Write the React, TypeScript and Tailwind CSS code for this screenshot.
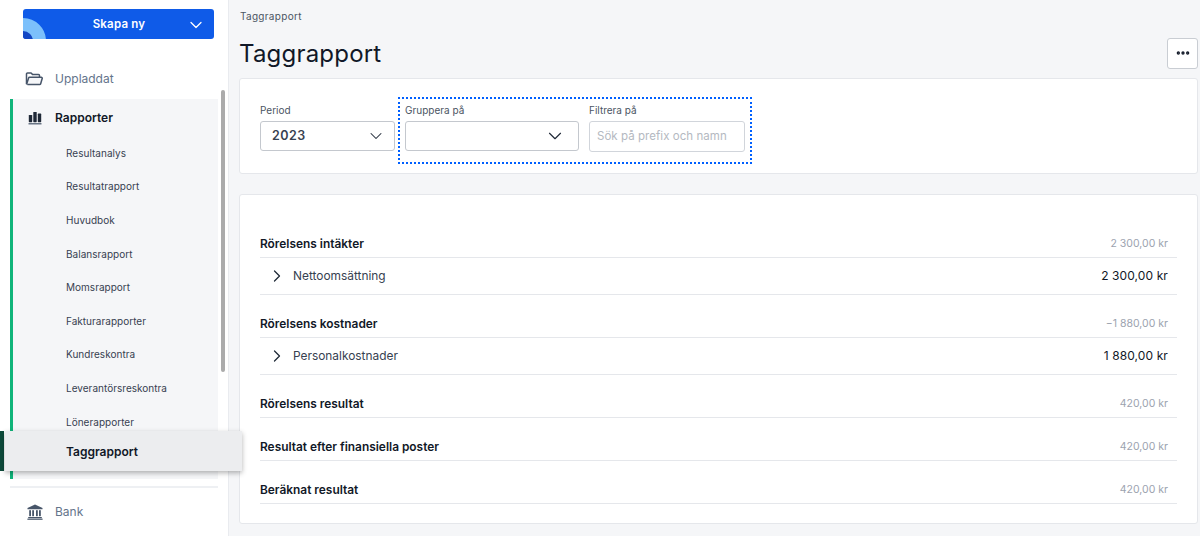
import { ChevronDown, ChevronRight, Ellipsis } from 'lucide-react';

const reportLinks = [
  'Resultanalys',
  'Resultatrapport',
  'Huvudbok',
  'Balansrapport',
  'Momsrapport',
  'Fakturarapporter',
  'Kundreskontra',
  'Leverantörsreskontra',
  'Lönerapporter',
];

function FolderIcon() {
  return (
    <svg width="18" height="14" viewBox="0 0 18 14" fill="none" stroke="#475569" strokeWidth="1.5" strokeLinejoin="round">
      <path d="M1.5 12V2a1 1 0 0 1 1-1h3.6l1.6 1.6h5.8a1 1 0 0 1 1 1V5" />
      <path d="M1.5 12.6 3.6 6a1 1 0 0 1 1-.7h11.6a1 1 0 0 1 1 1.3l-1.6 5.4a1 1 0 0 1-1 .6H2.4" fill="#f5f6f8" />
    </svg>
  );
}

function ChartIcon() {
  return (
    <svg width="14" height="14" viewBox="0 0 14 14" fill="#1f2937">
      <rect x="0.8" y="4" width="3.4" height="7.2" rx="0.6" />
      <rect x="5.3" y="1" width="3.4" height="10.2" rx="0.6" />
      <rect x="9.8" y="2.6" width="3.4" height="8.6" rx="0.6" />
      <rect x="0.5" y="12.2" width="13" height="1.2" fill="#475569" />
    </svg>
  );
}

function BankIcon() {
  return (
    <svg width="16" height="16" viewBox="0 0 16 16" fill="#475569">
      <path d="M8 0.5 15.5 4v1.2H0.5V4z" />
      <rect x="2.2" y="6.2" width="1.8" height="6" />
      <rect x="5.2" y="6.2" width="1.8" height="6" />
      <rect x="9" y="6.2" width="1.8" height="6" />
      <rect x="12" y="6.2" width="1.8" height="6" />
      <rect x="1.2" y="13" width="13.6" height="1.2" />
      <rect x="0.4" y="14.6" width="15.2" height="1.2" />
    </svg>
  );
}

function SumRow({ label, value }: { label: string; value: string }) {
  return (
    <div className="flex h-[43px] items-end justify-between border-b border-[#e5e7eb] pb-[3px]">
      <span className="text-[11.9px] leading-[20px] font-semibold text-[#111827]">{label}</span>
      <span className="pr-[9px] text-[10.5px] leading-[20px] text-[#9ca3af]">{value}</span>
    </div>
  );
}

function DetailRow({ label, value }: { label: string; value: string }) {
  return (
    <div className="flex h-[37px] items-center justify-between border-b border-[#e5e7eb]">
      <span className="flex items-center gap-[6px] pl-[7px] text-[11.9px] text-[#374151]">
        <ChevronRight className="h-5 w-5 text-[#1f2937]" strokeWidth={1.5} />
        {label}
      </span>
      <span className="pr-[9px] text-[12px] tracking-[0.1px] text-[#111827]">{value}</span>
    </div>
  );
}

export default function App() {
  return (
    <div className="flex h-[536px] w-[1200px] overflow-hidden bg-[#f5f6f8] font-['Inter',sans-serif]">
      {/* Sidebar */}
      <aside className="relative z-10 h-full w-[229px] shrink-0 border-r border-[#e9ebef] bg-white">
        <div className="pt-[9px] pl-[23px]">
          <button className="relative flex h-[30px] w-[191px] items-center justify-center overflow-hidden rounded-[3px] bg-[#0f5be8] pt-[1px] pl-[1px] text-[11.5px] font-semibold text-white">
            <svg className="absolute bottom-0 left-0" width="24" height="21" viewBox="0 0 24 21" fill="none">
              <circle cx="0" cy="23" r="16.5" fill="#1246c4" stroke="#7cc0fb" strokeWidth="13" />
            </svg>
            <span className="tracking-[0.2px]">Skapa ny</span>
            <ChevronDown className="absolute right-[8px] h-5 w-5" strokeWidth={1.5} />
          </button>
        </div>

        <div className="mt-[30px] flex h-[20px] items-center gap-[12px] pl-[25px] text-[12px] text-[#64748b]">
          <FolderIcon />
          <span>Uppladdat</span>
        </div>

        <div className="mt-[10px] ml-[10px] h-[380px] w-[208px] border-l-[3px] border-[#10b47a] bg-[#f5f6f8]">
          <div className="flex h-[37.5px] items-center gap-[13px] pl-[15px] text-[12px] font-semibold text-[#111827]">
            <ChartIcon />
            <span>Rapporter</span>
          </div>
          <ul className="text-[10px] tracking-[0.02px] text-[#374151]">
            {reportLinks.map(link => (
              <li key={link} className="flex h-[33.6px] items-center pl-[53px]">
                {link}
              </li>
            ))}
          </ul>
        </div>

        {/* Active item lies over the group and past the sidebar edge */}
        <div className="absolute top-[431px] left-0 flex h-[40px] w-[242px]">
          <div className="h-full w-[4px] bg-[#0d4a3a]" />
          <div className="ml-[1px] flex flex-1 items-center bg-[#ecedef] pt-[1px] pl-[61px] text-[12px] font-semibold text-[#111827] shadow-[0_2px_5px_rgba(0,0,0,0.3)]">
            Taggrapport
          </div>
        </div>

        <div className="absolute top-[90px] left-[221px] h-[282px] w-[4px] rounded-full bg-[#ababab]" />

        <div className="mx-[10px] mt-[7px] w-[208px] border-t-2 border-[#eef0f3]" />
        <div className="mt-[14px] flex h-[20px] items-center gap-[12px] pl-[27px] text-[12px] text-[#64748b]">
          <BankIcon />
          <span>Bank</span>
        </div>
      </aside>

      {/* Main */}
      <main className="min-w-0 flex-1 pr-[2px] pl-[10px]">
        <div className="flex h-[32px] items-center pl-[1px] text-[10px] tracking-[0.3px] text-[#4b5563]">Taggrapport</div>
        <div className="flex h-[46px] items-center justify-between">
          <h1 className="-mt-[2px] text-[24px] leading-[30px] tracking-[0.2px] text-[#111827]">Taggrapport</h1>
          <button className="-mt-[4px] flex h-[31px] w-[31px] items-center justify-center rounded-[3px] border border-[#c9cdd3] bg-white">
            <Ellipsis className="h-4 w-4 text-[#111827]" strokeWidth={3} />
          </button>
        </div>

        <section className="flex h-[96px] rounded-[3px] border border-[#e5e7eb] bg-white pt-[18px] pl-[20px]">
          <div className="pt-[7px]">
            <div className="h-[17px] text-[10px] leading-[12px] text-[#4b5563]">Period</div>
            <button className="flex h-[30px] w-[135px] items-center justify-between rounded-[3px] border border-[#c4c8ce] pr-[8px] pl-[11px] text-[12.5px] font-semibold tracking-[0.5px] text-[#374151]">
              2023
              <ChevronDown className="h-5 w-5 text-[#1f2937]" strokeWidth={1.25} />
            </button>
          </div>
          <div className="ml-[3px] flex h-[67px] w-[354px] gap-[10px] border-2 border-dotted border-[#0060ff] pt-[5px] pl-[5px]">
            <div>
              <div className="h-[17px] text-[10px] leading-[12px] text-[#4b5563]">Gruppera på</div>
              <button className="flex h-[30px] w-[174px] items-center justify-end rounded-[3px] border border-[#c4c8ce] pr-[12px]">
                <ChevronDown className="h-[22px] w-[22px] text-[#1f2937]" strokeWidth={1.25} />
              </button>
            </div>
            <div>
              <div className="h-[17px] text-[10px] leading-[12px] text-[#4b5563]">Filtrera på</div>
              <div className="flex h-[31px] w-[156px] items-center rounded-[3px] border border-[#d1d5db] px-[7px] text-[11.5px] tracking-[0.05px] text-[#b4b9c1]">
                Sök på prefix och namn
              </div>
            </div>
          </div>
        </section>

        <section className="mt-[20px] h-[330px] rounded-[3px] border border-[#e5e7eb] bg-white px-[20px] pt-[20px]">
          <SumRow label="Rörelsens intäkter" value="2 300,00 kr" />
          <DetailRow label="Nettoomsättning" value="2 300,00 kr" />
          <SumRow label="Rörelsens kostnader" value="−1 880,00 kr" />
          <DetailRow label="Personalkostnader" value="1 880,00 kr" />
          <SumRow label="Rörelsens resultat" value="420,00 kr" />
          <SumRow label="Resultat efter finansiella poster" value="420,00 kr" />
          <SumRow label="Beräknat resultat" value="420,00 kr" />
        </section>
      </main>
    </div>
  );
}
